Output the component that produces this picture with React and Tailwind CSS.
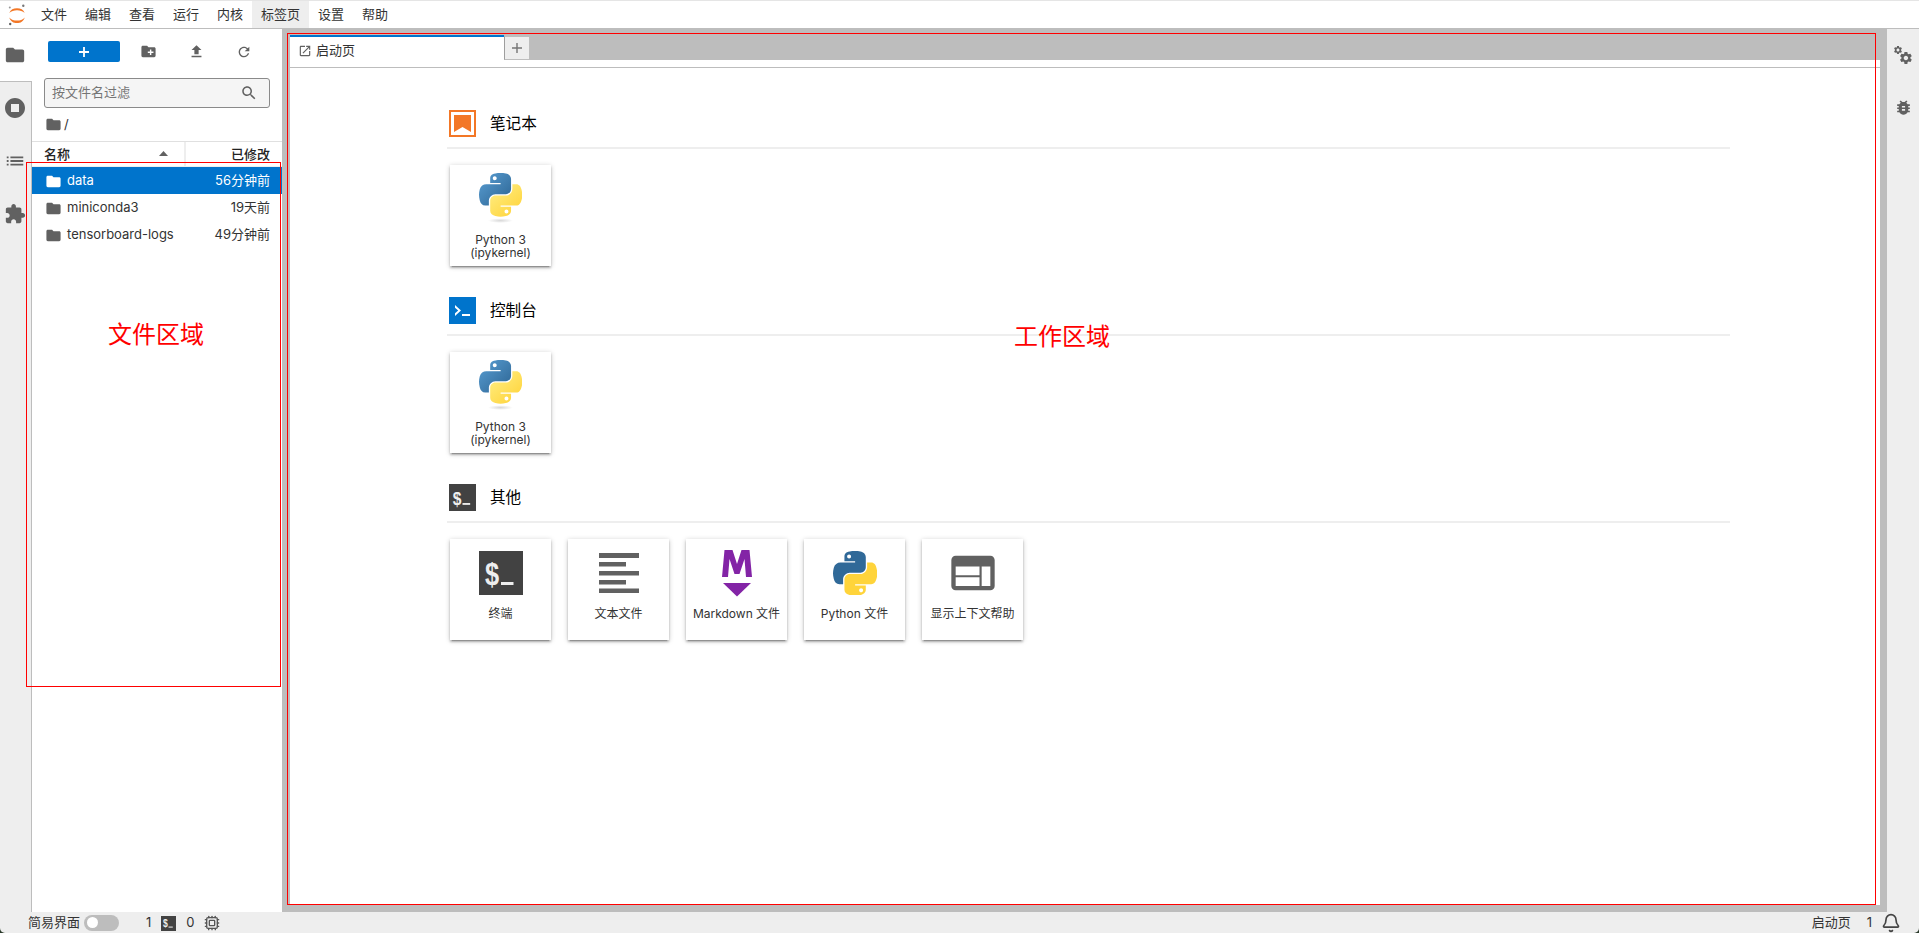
import React from "react";
import { Bell, Cpu } from "lucide-react";

const P = {
  folder: "M10 4H4c-1.1 0-2 .9-2 2v12c0 1.1.9 2 2 2h16c1.1 0 2-.9 2-2V8c0-1.1-.9-2-2-2h-8l-2-2z",
  newFolder: "M20 6h-8l-2-2H4c-1.1 0-1.99.9-1.99 2L2 18c0 1.1.9 2 2 2h16c1.1 0 2-.9 2-2V8c0-1.1-.9-2-2-2zm-1 8h-3v3h-2v-3h-3v-2h3V9h2v3h3v2z",
  upload: "M9 16h6v-6h4l-7-7-7 7h4zm-4 2h14v2H5z",
  refresh: "M17.65 6.35C16.2 4.9 14.21 4 12 4c-4.42 0-7.99 3.58-7.99 8s3.57 8 7.99 8c3.73 0 6.84-2.55 7.73-6h-2.08c-.82 2.33-3.04 4-5.65 4-3.31 0-6-2.69-6-6s2.69-6 6-6c1.66 0 3.14.69 4.22 1.78L13 11h7V4l-2.35 2.35z",
  stop: "M12 2C6.48 2 2 6.48 2 12s4.48 10 10 10 10-4.48 10-10S17.52 2 12 2zm4 14H8V8h8v8z",
  list: "M3 13h2v-2H3v2zm0 4h2v-2H3v2zm0-8h2V7H3v2zm4 4h14v-2H7v2zm0 4h14v-2H7v2zM7 7v2h14V7H7z",
  puzzle: "M20.5 11H19V7c0-1.1-.9-2-2-2h-4V3.5C13 2.12 11.88 1 10.5 1S8 2.12 8 3.5V5H4c-1.1 0-1.99.9-1.99 2v3.8H3.5c1.49 0 2.7 1.21 2.7 2.7s-1.21 2.7-2.7 2.7H2V20c0 1.1.9 2 2 2h3.8v-1.5c0-1.49 1.21-2.7 2.7-2.7 1.49 0 2.7 1.21 2.7 2.7V22H17c1.1 0 2-.9 2-2v-4h1.5c1.38 0 2.5-1.12 2.5-2.5S21.88 11 20.5 11z",
  search: "M15.5 14h-.79l-.28-.27C15.41 12.59 16 11.11 16 9.5 16 5.91 13.09 3 9.5 3S3 5.91 3 9.5 5.91 16 9.5 16c1.61 0 3.09-.59 4.23-1.57l.27.28v.79l5 4.99L20.49 19l-4.99-5zm-6 0C7.01 14 5 11.99 5 9.5S7.01 5 9.5 5 14 7.01 14 9.5 11.99 14 9.5 14z",
  launch: "M19 19H5V5h7V3H5c-1.11 0-2 .9-2 2v14c0 1.1.89 2 2 2h14c1.1 0 2-.9 2-2v-7h-2v7zM14 3v2h3.59l-9.83 9.83 1.41 1.41L19 6.41V10h2V3h-7z",
  bug: "M20 8h-2.81c-.45-.78-1.07-1.45-1.82-1.96L17 4.41 15.59 3l-2.17 2.17C12.96 5.06 12.49 5 12 5c-.49 0-.96.06-1.41.17L8.41 3 7 4.41l1.62 1.63C7.88 6.55 7.26 7.22 6.81 8H4v2h2.09c-.05.33-.09.66-.09 1v1H4v2h2v1c0 .34.04.67.09 1H4v2h2.81c1.04 1.79 2.97 3 5.19 3s4.15-1.21 5.19-3H20v-2h-2.09c.05-.33.09-.66.09-1v-1h2v-2h-2v-1c0-.34-.04-.67-.09-1H20V8zm-6 8h-4v-2h4v2zm0-4h-4v-2h4v2z",
  gear: "M19.14 12.94c.04-.3.06-.61.06-.94 0-.32-.02-.64-.07-.94l2.03-1.58c.18-.14.23-.41.12-.61l-1.92-3.32c-.12-.22-.37-.29-.59-.22l-2.39.96c-.5-.38-1.03-.7-1.62-.94l-.36-2.54c-.04-.24-.24-.41-.48-.41h-3.84c-.24 0-.43.17-.47.41l-.36 2.54c-.59.24-1.13.57-1.62.94l-2.39-.96c-.22-.08-.47 0-.59.22L2.74 8.87c-.12.21-.08.47.12.61l2.03 1.58c-.05.3-.09.63-.09.94s.02.64.07.94l-2.03 1.58c-.18.14-.23.41-.12.61l1.92 3.32c.12.22.37.29.59.22l2.39-.96c.5.38 1.03.7 1.62.94l.36 2.54c.05.24.24.41.48.41h3.84c.24 0 .44-.17.47-.41l.36-2.54c.59-.24 1.13-.56 1.62-.94l2.39.96c.22.08.47 0 .59-.22l1.92-3.32c.12-.22.07-.47-.12-.61l-2.01-1.58zM12 15.6c-1.98 0-3.6-1.62-3.6-3.6s1.62-3.6 3.6-3.6 3.6 1.62 3.6 3.6-1.62 3.6-3.6 3.6z",
  help: "M20 4H4c-1.1 0-1.99.9-1.99 2L2 18c0 1.1.9 2 2 2h16c1.1 0 2-.9 2-2V6c0-1.1-.9-2-2-2zm-5 14H4v-4h11v4zm0-5H4V9h11v4zm5 5h-4V9h4v9z",
};

const I = ({ d, size = 24, color = "#616161" }) => (
  <svg width={size} height={size} viewBox="0 0 24 24" fill={color} className="shrink-0">
    <path d={d} />
  </svg>
);

const BLUE = "M54.919 0.001c-4.584.022-8.961.413-12.813 1.095C30.76 3.099 28.7 7.295 28.7 15.032v10.219h26.813v3.406H18.638c-7.793 0-14.616 4.684-16.75 13.594-2.462 10.213-2.571 16.586 0 27.25 1.905 7.938 6.457 13.594 14.25 13.594h9.219v-12.25c0-8.85 7.657-16.656 16.75-16.656h26.781c7.454 0 13.406-6.138 13.406-13.625V15.032c0-7.266-6.13-12.725-13.406-13.937C64.282.328 59.502-.02 54.918.001zm-14.5 8.219c2.77 0 5.031 2.299 5.031 5.125 0 2.816-2.262 5.094-5.031 5.094-2.78 0-5.031-2.278-5.031-5.094 0-2.826 2.251-5.125 5.031-5.125z";
const YELLOW = "M85.638 28.657v11.906c0 9.231-7.826 17-16.75 17H42.106c-7.336 0-13.406 6.278-13.406 13.625v25.531c0 7.266 6.319 11.54 13.406 13.625 8.488 2.496 16.627 2.947 26.781 0 6.75-1.954 13.406-5.888 13.406-13.625V86.501H55.513v-3.406H95.7c7.793 0 10.696-5.436 13.406-13.594 2.8-8.399 2.68-16.476 0-27.25-1.925-7.758-5.604-13.594-13.406-13.594H85.638zM70.575 93.313c2.78 0 5.031 2.278 5.031 5.094 0 2.826-2.251 5.125-5.031 5.125-2.77 0-5.031-2.299-5.031-5.125 0-2.816 2.261-5.094 5.031-5.094z";

const PyKernel = ({ id }) => (
  <svg width="43" height="52" viewBox="0 0 110.42 133" className="shrink-0">
    <defs>
      <linearGradient id={`${id}b`} x1="0" y1="0" x2="0.9" y2="0.9">
        <stop offset="0" stopColor="#5a9fd4" />
        <stop offset="1" stopColor="#306998" />
      </linearGradient>
      <linearGradient id={`${id}y`} x1="0.9" y1="0.9" x2="0.3" y2="0.2">
        <stop offset="0" stopColor="#ffd43b" />
        <stop offset="1" stopColor="#ffe873" />
      </linearGradient>
      <radialGradient id={`${id}s`}>
        <stop offset="0" stopColor="#b8b8b8" stopOpacity="0.55" />
        <stop offset="1" stopColor="#b8b8b8" stopOpacity="0" />
      </radialGradient>
    </defs>
    <path d={BLUE} fill={`url(#${id}b)`} />
    <path d={YELLOW} fill={`url(#${id}y)`} />
    <ellipse cx="55" cy="122" rx="32" ry="6" fill={`url(#${id}s)`} />
  </svg>
);

const PyFile = () => (
  <svg width="44" height="44" viewBox="0 0 110.42 109.85" className="shrink-0">
    <path d={BLUE} fill="#306998" />
    <path d={YELLOW} fill="#ffd43b" />
  </svg>
);

const Notebook = () => (
  <svg width="27" height="27" viewBox="0 0 27 27" className="shrink-0">
    <rect x="1" y="1" width="25" height="25" fill="#fff" stroke="#f37726" strokeWidth="2" />
    <path d="M5 5h17v17l-8.5-5L5 22z" fill="#f37726" />
  </svg>
);

const Prompt = () => (
  <svg width="27" height="27" viewBox="0 0 27 27" className="shrink-0">
    <rect width="27" height="27" fill="#0074cc" />
    <path d="M6 8l6 5.5L6 19v-2.700l3.200-2.800L6 10.700z" fill="#fff" />
    <rect x="13" y="17" width="8" height="2" fill="#fff" />
  </svg>
);

const Term = ({ size }) => (
  <svg width={size} height={size} viewBox="0 0 44 44" className="shrink-0">
    <rect width="44" height="44" fill="#424242" />
    <text transform="translate(6 33.500) scale(0.82 1)" fontFamily="'Liberation Sans',sans-serif" fontWeight="700" fontSize="31" fill="#eeeeee">$</text>
    <rect x="22" y="31" width="12.500" height="3" fill="#eeeeee" />
  </svg>
);

const TextIcon = () => (
  <svg width="40" height="40" viewBox="0 0 40 40" fill="#616161" className="shrink-0">
    <rect x="0" y="0" width="40" height="5" />
    <rect x="0" y="9" width="27" height="4.500" />
    <rect x="0" y="18" width="40" height="4.500" />
    <rect x="0" y="27" width="27" height="4.500" />
    <rect x="0" y="35.500" width="40" height="4.500" />
  </svg>
);

const Markdown = () => (
  <svg width="30" height="47" viewBox="0 0 30 47" fill="#8324a6" className="shrink-0">
    <path d="M0 27L2.500 0h8L15 14 19.500 0h8L30 27h-6L22.500 9 17.500 24h-5L7.500 9 6 27z" />
    <path d="M1 33h28L15 46.500z" />
  </svg>
);

const Logo = () => (
  <svg width="18" height="22" viewBox="0 0 18 22" className="shrink-0">
    <path d="M1.300 9C2.600 5.600 5.400 4.200 9 4.200s6.400 1.400 7.700 4.800C14.700 7.200 12 6.200 9 6.200S3.300 7.200 1.300 9z" fill="#f37726" />
    <path d="M1.300 13.400C2.600 17.400 5.400 19 9 19s6.400-1.600 7.700-5.600C14.700 15.600 12 16.600 9 16.600s-5.700-1-7.700-3.200z" fill="#f37726" />
    <circle cx="15.300" cy="1.800" r="1.200" fill="#767677" />
    <circle cx="1.800" cy="3.600" r="1" fill="#989798" />
    <circle cx="2.200" cy="20" r="1.200" fill="#616262" />
  </svg>
);

const menu = ["文件", "编辑", "查看", "运行", "内核", "标签页", "设置", "帮助"];

const files = [
  { name: "data", time: "56分钟前", active: true },
  { name: "miniconda3", time: "19天前" },
  { name: "tensorboard-logs", time: "49分钟前" },
];

const Card = ({ icon, children }) => (
  <div className="w-[101px] h-[101px] bg-white flex flex-col items-center shadow-[0_1px_5px_0_rgba(0,0,0,0.22),0_2px_2px_0_rgba(0,0,0,0.2),0_3px_1px_-2px_rgba(0,0,0,0.2)]">
    <div className="h-[68px] w-full flex items-center justify-center">{icon}</div>
    <div className="text-[12px] leading-[13px] text-center text-[#333]">{children}</div>
  </div>
);

const Section = ({ icon, title, children }) => (
  <section className="mb-[31px]">
    <div className="flex items-center gap-[14px] pl-[2px] h-[27px]">
      {icon}
      <h3 className="text-[15.6px] text-black">{title}</h3>
    </div>
    <div className="h-[2px] bg-[#eeeeee] mt-[10px]" />
    <div className="flex gap-[17px] pl-[3px] mt-[16px]">{children}</div>
  </section>
);

export default function App() {
  return (
    <div className="relative h-screen w-full overflow-hidden flex flex-col bg-[#2a3a2a] text-[13px] text-[#333] font-[Inter,'Noto_Sans_CJK_SC',sans-serif]">
      {/* Top bar */}
      <header className="h-[29px] shrink-0 flex items-center bg-white border-t border-b border-t-[#e5e5e5] border-b-[#bdbdbd]">
        <div className="w-[32px] flex justify-center pl-[1px]">
          <Logo />
        </div>
        {menu.map((m) => (
          <div key={m} className={`h-full flex items-center px-[9px] ${m === "标签页" ? "bg-[#eeeeee]" : ""}`}>
            {m}
          </div>
        ))}
      </header>

      <div className="flex-1 min-h-0 flex bg-white">
        {/* Left activity bar */}
        <aside className="w-[32px] shrink-0 flex flex-col">
          <div className="h-[52px] flex items-center justify-center pr-[2px]">
            <I d={P.folder} size={22} />
          </div>
          <div className="flex-1 bg-[#eeeeee] border-t border-r border-[#bdbdbd] flex flex-col items-center">
            <div className="h-[53px] w-full flex items-center justify-center pr-[1px] pb-[2px]">
              <I d={P.stop} size={24} />
            </div>
            <div className="h-[53px] w-full flex items-center justify-center pr-[1px] pb-[2px]">
              <I d={P.list} size={22} />
            </div>
            <div className="h-[53px] w-full flex items-center justify-center pr-[1px] pb-[2px]">
              <I d={P.puzzle} size={22} />
            </div>
          </div>
        </aside>

        {/* File browser */}
        <div className="w-[250px] shrink-0 flex flex-col">
          <div className="flex items-center pt-[12px] pl-[16px]">
            <div className="w-[72px] h-[21px] bg-[#0074cc] rounded-[2px] flex items-center justify-center">
              <svg width="12" height="12" viewBox="0 0 12 12" fill="#fff">
                <path d="M5.100 1h1.800v4.100H11v1.800H6.900V11H5.100V6.900H1V5.100h4.100z" />
              </svg>
            </div>
            <div className="w-[48px] ml-[4px] flex justify-center"><I d={P.newFolder} size={17} /></div>
            <div className="w-[48px] flex justify-center"><I d={P.upload} size={17} /></div>
            <div className="w-[48px] flex justify-center"><I d={P.refresh} size={16} /></div>
          </div>
          <div className="mx-[12px] mt-[16px] h-[30px] rounded-[3px] border border-[#8a8a8a] bg-[#f5f5f5] flex items-center justify-between pl-[7px] pr-[11px]">
            <span className="text-[#757575]">按文件名过滤</span>
            <I d={P.search} size={18} />
          </div>
          <div className="h-[33px] flex items-center pl-[13px] gap-[2px]">
            <I d={P.folder} size={17} />
            <span>/</span>
          </div>
          <div className="h-[26px] flex border-t border-b border-t-[#e0e0e0] border-b-[#f0f0f0] font-medium text-[#222]">
            <div className="w-[154px] flex items-center justify-between pl-[12px] pr-[16px] pt-[2px] border-r-2 border-[#eeeeee]">
              <span>名称</span>
              <svg width="9" height="5" viewBox="0 0 9 5" fill="#616161" className="mb-[3px]"><path d="M4.500 0L9 5H0z" /></svg>
            </div>
            <div className="flex-1 flex items-center justify-end pr-[12px] pt-[1px]">已修改</div>
          </div>
          {files.map((f) => (
            <div key={f.name} className={`h-[27px] flex items-center pl-[13px] pr-[12px] pt-[1px] ${f.active ? "bg-[#0074cc] text-white" : "text-[#333]"}`}>
              <I d={P.folder} size={17} color={f.active ? "#fff" : "#616161"} />
              <span className="ml-[5px] flex-1">{f.name}</span>
              <span>{f.time}</span>
            </div>
          ))}
        </div>

        {/* Main area */}
        <main className="flex-1 min-w-0 bg-[#bdbdbd] flex flex-col pl-[8px] pr-[7px] pb-[7px]">
          <div className="flex-1 min-h-0 flex flex-col">
            <div className="h-[39px] shrink-0 flex border-b border-[#bdbdbd]">
              <div className="w-[214px] mt-[6px] bg-white border-t-[2px] border-[#0074cc] flex items-center pl-[8px] gap-[4px] pb-[2px]">
                <I d={P.launch} size={14} />
                <span className="text-[#333] text-[13px]">启动页</span>
              </div>
              <div className="flex-1 flex flex-col">
                <div className="h-[31px] flex items-start pt-[7px]">
                  <div className="w-[26px] h-[24px] bg-[#eeeeee] border border-[#bdbdbd] border-l-[#9e9e9e] flex items-center justify-center">
                    <svg width="12" height="12" viewBox="0 0 12 12" fill="#757575"><path d="M5.300 1h1.400v4.300H11v1.400H6.700V11H5.300V6.700H1V5.300h4.300z" /></svg>
                  </div>
                </div>
                <div className="flex-1 bg-white" />
              </div>
            </div>
            <div className="flex-1 min-h-0 bg-white pt-[42px] pl-[157px]">
              <div className="w-[1283px]">
                <Section icon={<Notebook />} title="笔记本">
                  <Card icon={<PyKernel id="a" />}>Python 3<br />(ipykernel)</Card>
                </Section>
                <Section icon={<Prompt />} title="控制台">
                  <Card icon={<PyKernel id="b" />}>Python 3<br />(ipykernel)</Card>
                </Section>
                <Section icon={<Term size={27} />} title="其他">
                  <Card icon={<Term size={44} />}>终端</Card>
                  <Card icon={<TextIcon />}>文本文件</Card>
                  <Card icon={<Markdown />}>Markdown 文件</Card>
                  <Card icon={<PyFile />}>Python 文件</Card>
                  <Card icon={<I d={P.help} size={52} />}>显示上下文帮助</Card>
                </Section>
              </div>
            </div>
          </div>
        </main>

        {/* Right bar */}
        <aside className="w-[32px] shrink-0 bg-[#eeeeee] flex flex-col">
          <div className="h-[52px] flex items-center justify-center">
            <svg width="20" height="20" viewBox="0 0 24 24" fill="#616161" className="shrink-0">
              <path d={P.gear} transform="scale(0.5)" />
              <path d={P.gear} transform="translate(6.500 6.500) scale(0.75)" />
            </svg>
          </div>
          <div className="h-[53px] flex items-center justify-center">
            <I d={P.bug} size={19} />
          </div>
        </aside>
      </div>

      {/* Status bar */}
      <footer className="h-[21px] shrink-0 bg-[#eeeeee] rounded-b-[5px] flex items-center pl-[28px] pr-[18px]">
        <span>简易界面</span>
        <div className="ml-[4px] w-[35px] h-[16px] rounded-full bg-[#bdbdbd] flex items-center pl-[3px]">
          <div className="w-[11px] h-[11px] rounded-full bg-white" />
        </div>
        <span className="ml-[27px]">1</span>
        <span className="ml-[10px] mt-[2px]"><Term size={15} /></span>
        <span className="ml-[10px]">0</span>
        <Cpu size={16} color="#555" className="ml-[9px]" />
        <div className="flex-1" />
        <span>启动页</span>
        <span className="ml-[16px]">1</span>
        <Bell size={20} color="#444" className="ml-[9px]" />
      </footer>

      {/* Annotation overlays */}
      <div className="absolute left-[26px] top-[162px] w-[255px] h-[525px] border border-[#f00] pointer-events-none" />
      <div className="absolute left-[287px] top-[33px] w-[1589px] h-[872px] border border-[#f00] pointer-events-none" />
      <div className="absolute left-[108px] top-[318px] text-[24px] leading-[34px] text-[#f00]">文件区域</div>
      <div className="absolute left-[1014px] top-[320px] text-[24px] leading-[34px] text-[#f00]">工作区域</div>
    </div>
  );
}
